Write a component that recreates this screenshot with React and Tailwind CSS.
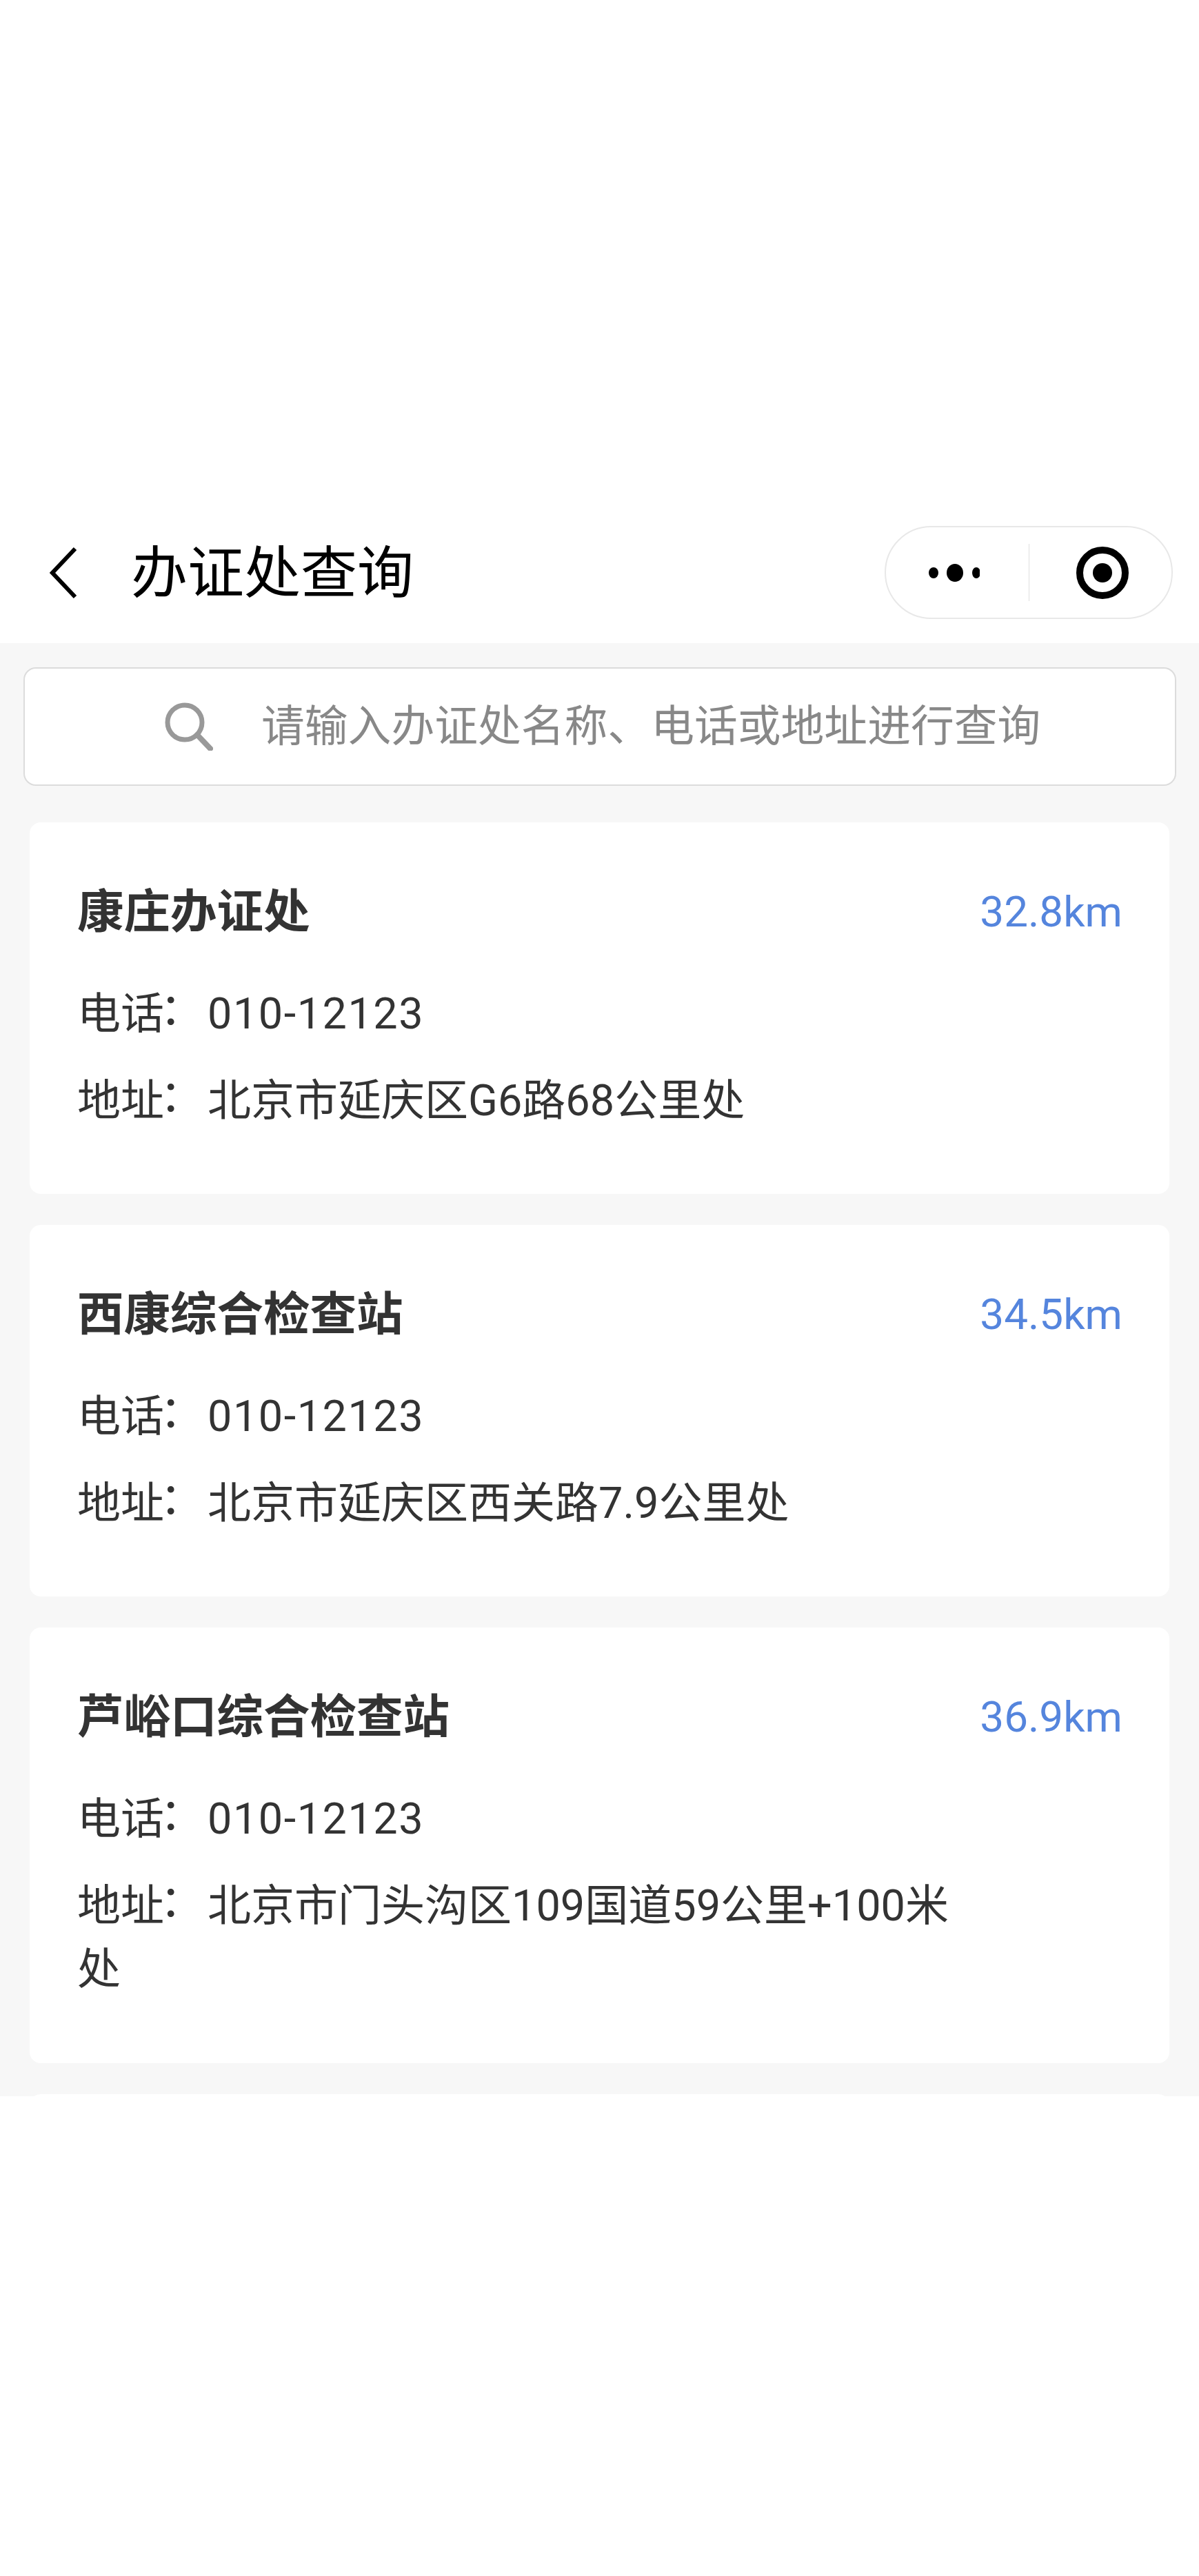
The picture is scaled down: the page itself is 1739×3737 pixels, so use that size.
import React from 'react';

const cjk = "font-['Roboto','Noto_Sans_CJK_SC',sans-serif]";

const stations = [
  { name: '康庄办证处', km: '32.8km', phone: '010-12123', address: '北京市延庆区G6路68公里处', height: 'h-[539px]' },
  { name: '西康综合检查站', km: '34.5km', phone: '010-12123', address: '北京市延庆区西关路7.9公里处', height: 'h-[539px]' },
  { name: '芦峪口综合检查站', km: '36.9km', phone: '010-12123', address: '北京市门头沟区109国道59公里+100米处', height: 'h-[632px]' },
];

// the colon sits higher in its cell in the reference than in the SC cut
const Colon = () => <span className="inline-block -translate-x-[6px] -translate-y-[6px]">：</span>;

const StationCard = ({ name, km, phone, address, height }) => (
  <div className={`${height} bg-white rounded-[16px] pl-[69px] pr-[68px] pt-[85px]`}>
    <div className="flex items-center justify-between h-[90px]">
      <h2 className="text-[67.5px] leading-[90px] font-bold text-[#333]">{name}</h2>
      <span className="text-[62px] leading-[90px] text-[#5585dd]">{km}</span>
    </div>
    <p className="mt-[57px] text-[63px] leading-[92px] text-[#333]">
      电话<Colon /><span className="tracking-[1.5px]">{phone}</span>
    </p>
    <p className="mt-[34px] w-[1300px] text-[63px] leading-[92px] text-[#333]">
      地址<Colon />{address}
    </p>
  </div>
);

export default function App() {
  return (
    <div className={`${cjk} h-[3737px] bg-white`}>
      {/* Top bar */}
      <div className="h-[933px] pt-[763px] pl-[72px] pr-[38px]">
        <div className="flex items-center h-[135px]">
          <svg width="40" height="76" viewBox="0 0 40 76" fill="none" className="shrink-0">
            <path d="M37 3 L4 38 L37 73" stroke="#000" strokeWidth="6" />
          </svg>
          <h1 className="ml-[78px] pt-[3px] text-[82px] leading-[135px] text-black">办证处查询</h1>
          <div className="ml-auto w-[418px] h-[135px] flex items-center rounded-full border-2 border-[#e8e8e8] bg-white">
            <div className="w-[207px] flex justify-center pr-[10px]">
              <svg width="74" height="26" viewBox="0 0 74 26" fill="#000">
                <ellipse cx="7" cy="13" rx="7" ry="8" />
                <ellipse cx="38" cy="13" rx="12" ry="13" />
                <ellipse cx="69" cy="13" rx="6" ry="8" />
              </svg>
            </div>
            <div className="w-[1px] h-[83px] bg-[#dedede]" />
            <div className="flex-1 flex justify-center pl-[5px]">
              <svg width="76" height="76" viewBox="0 0 76 76" fill="none">
                <circle cx="38" cy="38" r="33" stroke="#000" strokeWidth="10" />
                <circle cx="38" cy="38" r="14" fill="#000" />
              </svg>
            </div>
          </div>
        </div>
      </div>

      {/* List */}
      <div className="h-[2108px] overflow-hidden bg-[#f7f7f7] pt-[35px]">
        <div className="ml-[34px] mr-[33px] h-[172px] flex items-center rounded-[18px] border-2 border-[#dcdcdc] bg-white pl-[203px]">
          <svg width="70" height="70" viewBox="0 0 70 70" fill="none" className="shrink-0">
            <circle cx="29" cy="29" r="25" stroke="#999" strokeWidth="7" />
            <path d="M47 47 L66 67" stroke="#999" strokeWidth="8" strokeLinecap="round" />
          </svg>
          <span className="ml-[70px] text-[62.8px] leading-[90px] text-[#888]">请输入办证处名称、电话或地址进行查询</span>
        </div>
        <div className="mt-[53px] mx-[43px] flex flex-col gap-[45px]">
          {stations.map((s) => (
            <StationCard key={s.name} {...s} />
          ))}
          <div className="h-[20px] shrink-0 bg-white rounded-t-[16px]" />
        </div>
      </div>
    </div>
  );
}
